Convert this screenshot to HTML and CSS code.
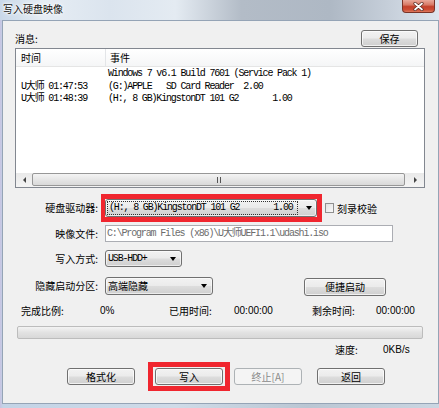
FILE: index.html
```html
<!DOCTYPE html>
<html lang="zh-CN">
<head>
<meta charset="utf-8">
<title>写入硬盘映像</title>
<link rel="stylesheet" href="styles.css">
</head>
<body>
<div class="window">
  <div class="titlebar">
    <span class="title">写入硬盘映像</span>
    <div class="close">
      <svg width="11" height="9" viewBox="0 0 11 9"><path d="M2 1.5 L9 7.5 M9 1.5 L2 7.5" stroke="#5a2a22" stroke-width="3.2" stroke-linecap="round"/><path d="M2 1.5 L9 7.5 M9 1.5 L2 7.5" stroke="#fff" stroke-width="1.7" stroke-linecap="round"/></svg>
    </div>
  </div>
  <div class="client">
    <div class="msg-head">
      <span class="msg-label">消息:</span>
      <div class="btn save">保存</div>
    </div>
    <div class="listbox">
      <div class="lv-header">
        <div class="col-time">时间</div>
        <div class="col-event">事件</div>
      </div>
      <div class="lv-rows">
        <div class="lv-row"><div class="col-time mono"></div><div class="col-event mono">Windows 7 v6.1 Build 7601 (Service Pack 1)</div></div>
        <div class="lv-row"><div class="col-time mono">U大师 01:47:53</div><div class="col-event mono">(G:)APPLE   SD Card Reader  2.00</div></div>
        <div class="lv-row"><div class="col-time mono">U大师 01:48:39</div><div class="col-event mono">(H:, 8 GB)KingstonDT 101 G2       1.00</div></div>
      </div>
      <div class="hscroll">
        <div class="sb-arrow left"><span class="tri-left"></span></div>
        <div class="sb-thumb"><span class="grip"></span></div>
        <div class="sb-arrow right"><span class="tri-right"></span></div>
      </div>
    </div>

    <div class="row row-drive">
      <div class="lbl">硬盘驱动器:</div>
      <div class="redbox drive-box">
        <div class="combo drive-combo">
          <span class="focus mono">(H:, 8 GB)KingstonDT 101 G2       1.00</span>
          <span class="arrow"></span>
        </div>
      </div>
      <span class="checkbox"></span>
      <span class="check-label">刻录校验</span>
    </div>

    <div class="row row-file">
      <div class="lbl">映像文件:</div>
      <div class="textbox mono">C:\Program Files (x86)\U大师UEFI1.1\udashi.iso</div>
    </div>

    <div class="row row-method">
      <div class="lbl">写入方式:</div>
      <div class="combo method-combo">
        <span class="mono combo-text">USB-HDD+</span>
        <span class="arrow"></span>
      </div>
    </div>

    <div class="row row-hidden">
      <div class="lbl">隐藏启动分区:</div>
      <div class="combo hidden-combo">
        <span class="combo-text">高端隐藏</span>
        <span class="arrow"></span>
      </div>
      <div class="btn quick">便捷启动</div>
    </div>

    <div class="stats">
      <span>完成比例:</span>
      <span class="num">0%</span>
      <span>已用时间:</span>
      <span class="num">00:00:00</span>
      <span>剩余时间:</span>
      <span class="num">00:00:00</span>
    </div>

    <div class="progress"></div>

    <div class="speed">
      <span class="speed-label">速度:</span>
      <span class="num">0KB/s</span>
    </div>

    <div class="actions">
      <div class="btn act">格式化</div>
      <div class="redbox write-box"><div class="btn act">写入</div></div>
      <div class="btn act disabled">终止[A]</div>
      <div class="btn act back">返回</div>
    </div>
  </div>
</div>
</body>
</html>
```

FILE: styles.css
```css
* { box-sizing: border-box; }
html, body { margin: 0; padding: 0; }
body {
  width: 439px;
  height: 408px;
  overflow: hidden;
  font-family: "Noto Sans CJK SC", "Liberation Sans", sans-serif;
  font-size: 10px;
  color: #000;
  background: #c9d6e4;
}
.window {
  display: flex;
  flex-direction: column;
  width: 439px;
  height: 408px;
  background: linear-gradient(90deg, #c7c3e2 0px, #c3d3e6 3px, #cfdbe8 40%, #bac6d3 70%, #cbd6e2 100%);
}
.titlebar {
  height: 20px;
  flex: none;
  display: flex;
  justify-content: space-between;
  align-items: flex-start;
  padding: 0 4px 0 3px;
  background: linear-gradient(90deg, #c9d8e9 0%, #e6edf4 10%, #dbe4ee 25%, #e4ebf2 40%, #b3bcc7 55%, #aeb8c4 75%, #c5ced9 88%, #dde5ee 100%);
}
.title {
  line-height: 18px;
  font-size: 10px;
  color: #111;
  text-shadow: 0 0 5px #fff, 0 0 3px #fff, 0 0 2px #fff;
}
.close {
  width: 33px;
  height: 13px;
  border: 1px solid #7a3327;
  border-top: none;
  border-radius: 0 0 4px 4px;
  background: linear-gradient(#e9a99b 0%, #d87a66 40%, #c4412b 55%, #cc4c34 80%, #de7a5f 100%);
  display: flex;
  justify-content: center;
  align-items: center;
}
.client {
  flex: none;
  margin-left: 2px;
  width: 437px;
  height: 384px;
  border: 1px solid #95a4b6;
  background: #f0f0f0;
  padding: 9px 0 0 12px;
}
.mono {
  font-family: "Liberation Mono", "Noto Sans CJK SC", monospace;
  font-size: 10px;
  letter-spacing: -1.17px;
  white-space: pre;
}
.num {
  font-family: "Liberation Sans", sans-serif;
  font-size: 10px;
}

/* buttons */
.btn {
  display: flex;
  justify-content: center;
  align-items: center;
  height: 17px;
  border: 1px solid #707070;
  border-radius: 3px;
  background: linear-gradient(#f2f2f2 0%, #ebebeb 48%, #dddddd 52%, #cfcfcf 100%);
  box-shadow: inset 0 0 0 1px rgba(255,255,255,0.7);
  font-size: 10px;
  line-height: 1;
}
.btn.disabled {
  border-color: #adb2b5;
  background: #f4f4f4;
  box-shadow: none;
  color: #8a8a8a;
}

/* message header */
.msg-head {
  width: 403px;
  height: 17px;
  display: flex;
  justify-content: space-between;
  align-items: flex-end;
}
.msg-label { line-height: 12px; padding-bottom: 2px; }
.save { width: 57px; }

/* list */
.listbox {
  margin-top: 1px;
  width: 410px;
  height: 140px;
  border: 1px solid #828790;
  background: #fff;
  display: flex;
  flex-direction: column;
}
.lv-header {
  height: 18px;
  flex: none;
  display: flex;
  border-bottom: 1px solid #e5e5e5;
  background: linear-gradient(#ffffff, #f5f6f7);
  line-height: 17px;
}
.lv-header .col-time { border-right: 1px solid #e3e5e8; }
.lv-header .col-event { padding-left: 4px; }
.col-time { width: 90px; flex: none; padding-left: 5px; }
.col-event { flex: 1; padding-left: 3px; }
.lv-rows { flex: 1; padding-top: 1px; }
.lv-row { display: flex; height: 12.5px; line-height: 12.5px; }
.lv-row .col-event { padding-left: 2px; }

.hscroll {
  height: 14px;
  flex: none;
  display: flex;
  background: linear-gradient(#e9e9e9, #f4f4f4);
}
.sb-arrow {
  display: flex;
  justify-content: center;
  align-items: center;
  flex: none;
}
.sb-arrow.left { width: 16px; }
.sb-arrow.right { width: 18px; }
.tri-left {
  width: 0; height: 0;
  border-top: 3px solid transparent;
  border-bottom: 3px solid transparent;
  border-right: 3px solid #444;
}
.tri-right {
  width: 0; height: 0;
  border-top: 3px solid transparent;
  border-bottom: 3px solid transparent;
  border-left: 3px solid #444;
}
.sb-thumb {
  flex: 1;
  margin: 0 1px 1px 0;
  border: 1px solid #979797;
  border-radius: 2px;
  background: linear-gradient(#f4f4f4 0%, #e6e6e6 50%, #d9d9d9 100%);
  display: flex;
  justify-content: center;
  align-items: center;
}
.grip {
  width: 4px;
  height: 6px;
  border-left: 1px solid #555;
  border-right: 1px solid #555;
}

/* form rows */
.row { display: flex; align-items: center; }
.lbl {
  width: 86px;
  flex: none;
  text-align: right;
  padding-right: 3px;
  line-height: 12px;
}
.redbox {
  border: 5px solid #f0262f;
  border-left-width: 4px;
}
.row-drive { margin-top: 6px; height: 28px; }
.combo {
  display: flex;
  align-items: center;
  justify-content: space-between;
  border: 1px solid #707070;
  border-radius: 3px;
  background: linear-gradient(#f2f2f2 0%, #ebebeb 48%, #dddddd 52%, #cfcfcf 100%);
  box-shadow: inset 0 0 0 1px rgba(255,255,255,0.6);
  padding-left: 2px;
}
.arrow {
  width: 0; height: 0;
  border-left: 3.5px solid transparent;
  border-right: 3.5px solid transparent;
  border-top: 4px solid #000;
  margin-right: 5px;
  flex: none;
}
.drive-combo { width: 212px; height: 18px; padding-left: 1px; }
.focus {
  flex: 1;
  margin-right: 8px;
  height: 14px;
  line-height: 12px;
  border: 1px dotted #333;
  padding-left: 1px;
}
.drive-combo .arrow { margin-right: 4px; }
.checkbox {
  width: 9px;
  height: 10px;
  margin-left: 3px;
  border: 1px solid #8f8f8f;
  background: linear-gradient(135deg, #e0e0e0, #fafafa);
  flex: none;
}
.check-label { margin-left: 3px; }

.row-file { margin-top: 3px; height: 17px; }
.textbox {
  margin-left: 4px;
  width: 288px;
  height: 17px;
  border: 1px solid #abadb3;
  background: #fff;
  color: #6d6d6d;
  padding-left: 1px;
  line-height: 15px;
}

.row-method { margin-top: 8px; height: 17px; }
.method-combo { margin-left: 4px; width: 77px; height: 17px; }
.row-hidden { margin-top: 9px; height: 19px; }
.hidden-combo { margin-left: 4px; width: 108px; height: 18px; }
.combo-text { line-height: 14px; }
.quick { margin-left: 91px; width: 82px; height: 18px; margin-top: 2px; }

.stats {
  margin-top: 10px;
  height: 12px;
  line-height: 12px;
  padding-left: 6px;
  display: grid;
  grid-template-columns: 79px 69px 65px 78px 64px auto;
}
.progress {
  margin: 9px 0 0 2px;
  width: 406px;
  height: 13px;
  border: 1px solid #bcbcbc;
  border-radius: 2px;
  background: linear-gradient(#f3f3f3 0%, #e2e2e2 50%, #d8d8d8 100%);
}
.speed {
  margin-top: 5px;
  height: 12px;
  line-height: 12px;
  display: flex;
  padding-left: 320px;
}
.speed-label { width: 48px; }

.actions {
  margin-top: 6px;
  display: flex;
  align-items: center;
  padding-left: 52px;
}
.act { width: 68px; }
.write-box { margin-left: 13px; padding: 1px 2px; border-left-width: 5px; }
.disabled { margin-left: 4px; }
.back { margin-left: 15px; }
```
